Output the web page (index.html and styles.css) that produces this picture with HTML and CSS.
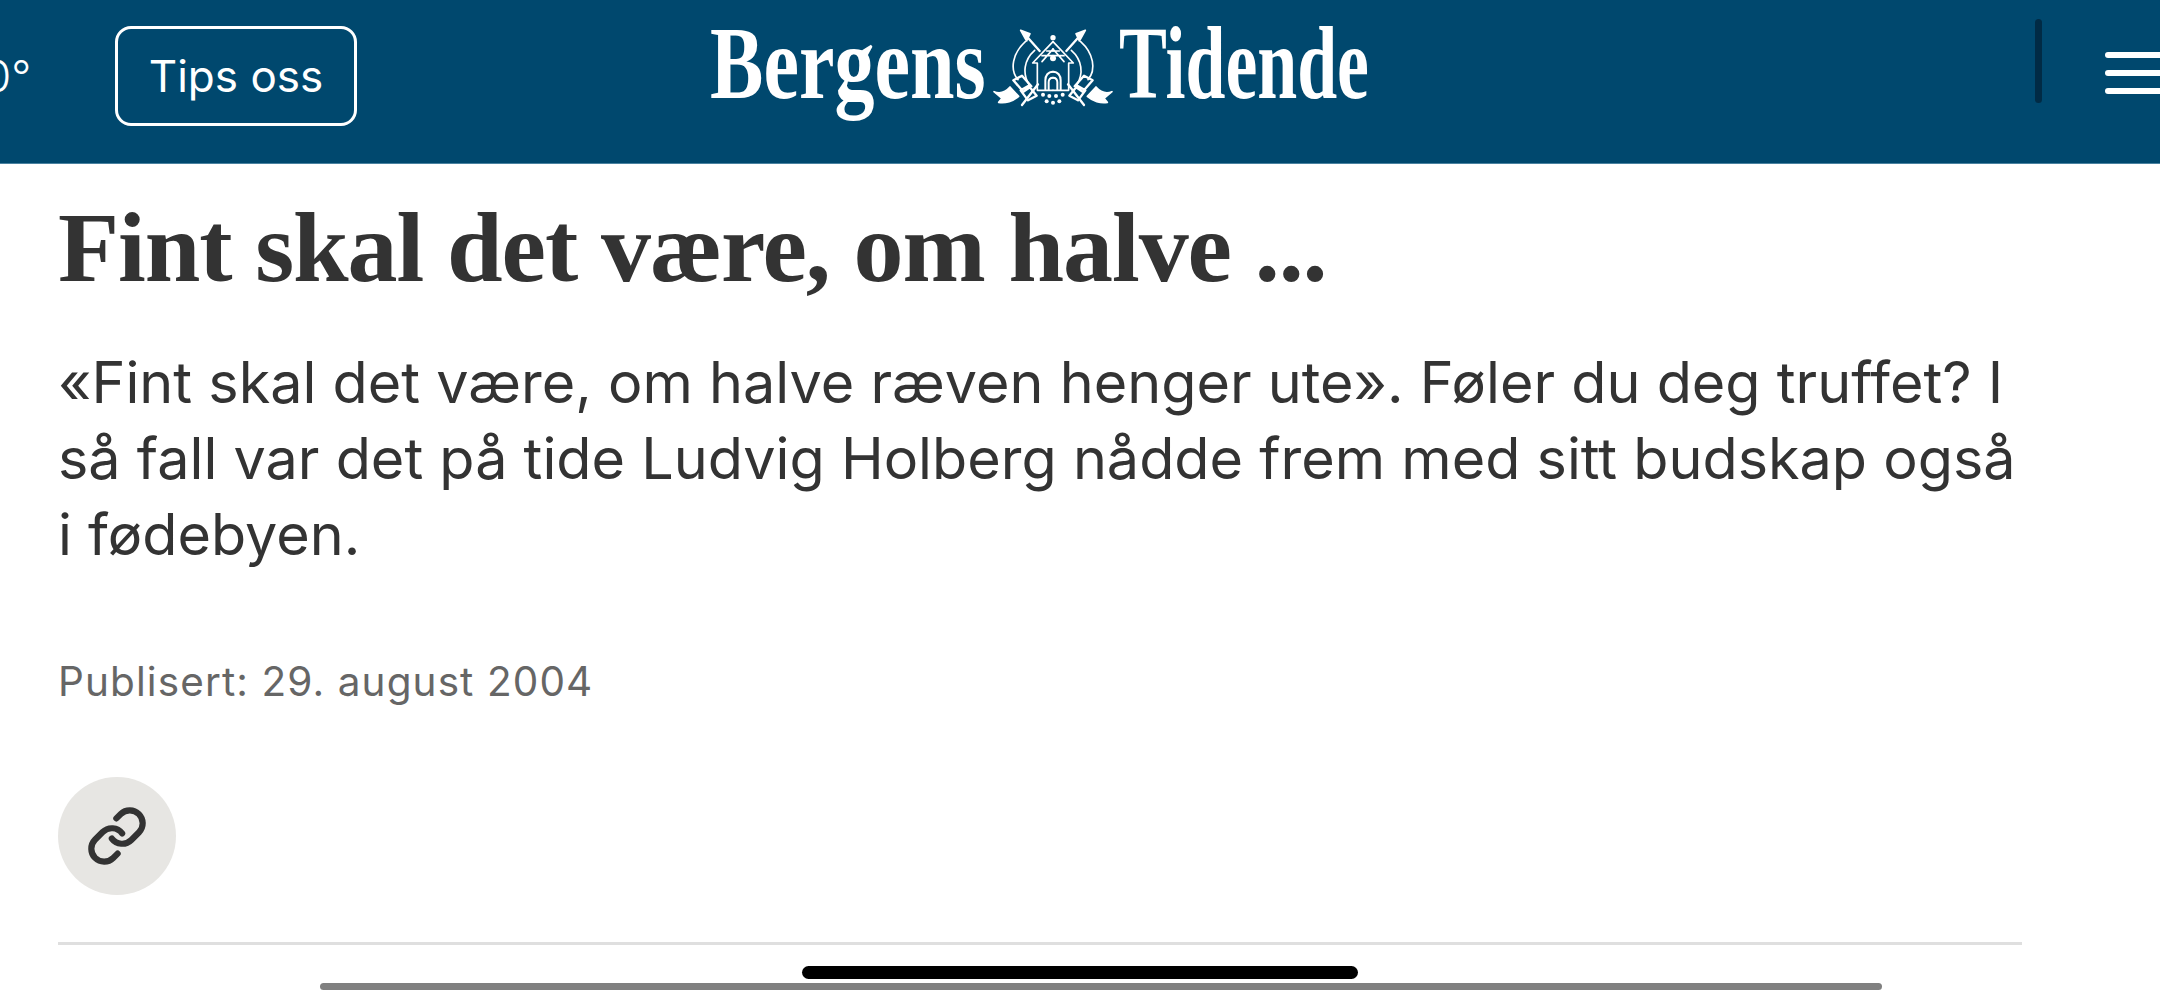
FILE: index.html
```html
<!DOCTYPE html>
<html lang="no">
<head>
  <meta charset="UTF-8" />
  <title>Fint skal det være, om halve ...</title>
  <link rel="stylesheet" href="styles.css">
</head>
<body>
  <header class="topbar">
    <span class="temp">0°</span>
    <a class="tips" href="#">Tips oss</a>
    <a class="logo" href="#">
      <span class="logo-box logo-box-left"><span class="logo-word word-bergens">Bergens</span></span>
      <svg class="crest" viewBox="25 25 360 235" fill="none" stroke="#fff" stroke-width="5" stroke-linecap="round" stroke-linejoin="round">
        <g>
          <path d="M125 45L165 90M250 190L298 252" stroke-width="7"/>
          <path d="M108 28L136 38L126 60Z" fill="#fff"/>
          <path d="M122 62C84 96 74 146 100 176M150 88C118 116 112 158 134 192"/>
          <path d="M205 62L144 126L158 126V208H205"/>
          <path d="M205 84L172 122M172 104H205M186 90H205"/>
          <path d="M205 152C190 152 182 164 182 178V206M205 170C197 170 192 175 192 184V206" stroke-width="6"/>
          <path d="M86 178L112 164L140 196L116 212ZM108 208L132 194L156 224L130 238Z" stroke-width="7"/>
          <path d="M28 212C48 220 62 214 76 198L102 226C86 240 62 248 42 244L52 232Z" fill="#fff"/>
        </g>
        <g transform="matrix(-1 0 0 1 410 0)">
          <path d="M125 45L165 90M250 190L298 252" stroke-width="7"/>
          <path d="M108 28L136 38L126 60Z" fill="#fff"/>
          <path d="M122 62C84 96 74 146 100 176M150 88C118 116 112 158 134 192"/>
          <path d="M205 62L144 126L158 126V208H205"/>
          <path d="M205 84L172 122M172 104H205M186 90H205"/>
          <path d="M205 152C190 152 182 164 182 178V206M205 170C197 170 192 175 192 184V206" stroke-width="6"/>
          <path d="M86 178L112 164L140 196L116 212ZM108 208L132 194L156 224L130 238Z" stroke-width="7"/>
          <path d="M28 212C48 220 62 214 76 198L102 226C86 240 62 248 42 244L52 232Z" fill="#fff"/>
        </g>
        <circle cx="205" cy="50" r="8" fill="#fff" stroke="none"/>
        <circle cx="205" cy="112" r="9" fill="#fff" stroke="none"/>
        <g fill="#fff" stroke="none">
          <circle cx="175" cy="221" r="6"/><circle cx="194" cy="225" r="6"/><circle cx="214" cy="225" r="6"/><circle cx="234" cy="221" r="6"/>
          <circle cx="186" cy="241" r="6"/><circle cx="205" cy="245" r="6"/><circle cx="224" cy="241" r="6"/>
        </g>
      </svg>
      <span class="logo-box logo-box-right"><span class="logo-word word-tidende">Tidende</span></span>
    </a>
    <span class="divider"></span>
    <button class="menu" aria-label="Meny"><i></i><i></i><i></i></button>
  </header>

  <main class="article">
    <h1 class="title">Fint skal det være, om halve ...</h1>
    <p class="lead">«Fint skal det være, om halve ræven henger ute». Føler du deg truffet? I så fall var det på tide Ludvig Holberg nådde frem med sitt budskap også i fødebyen.</p>
    <p class="meta">Publisert: 29. august 2004</p>
    <a class="share" href="#" aria-label="Kopier lenke">
      <svg viewBox="0 0 24 24" width="62" height="62" fill="none" stroke="#333" stroke-width="2.4" stroke-linecap="round" stroke-linejoin="round">
        <path d="M10 13a5 5 0 0 0 7.54.54l3-3a5 5 0 0 0-7.07-7.07l-1.72 1.71"/>
        <path d="M14 11a5 5 0 0 0-7.54-.54l-3 3a5 5 0 0 0 7.07 7.07l1.71-1.71"/>
      </svg>
    </a>
    <hr class="rule" />
  </main>

  <div class="home-bar"></div>
  <div class="scroll-bar"></div>
</body>
</html>
```

FILE: styles.css
```css
html, body {
  margin: 0;
  padding: 0;
  height: 997px;
  overflow: hidden;
  background: #fff;
  color: #333;
  font-family: "Inter", "Liberation Sans", sans-serif;
}
* { box-sizing: border-box; }

.topbar {
  display: flex;
  align-items: center;
  height: 164px;
  background: #00486e;
  border-bottom: 1px solid #4a82a0;
  color: #fff;
  overflow: hidden;
}

.temp {
  flex: none;
  width: 115px;
  margin-left: -16px;
  margin-right: 16px;
  margin-top: -12px;
  font-size: 44px;
  font-weight: 300;
}

.tips {
  display: flex;
  align-items: center;
  justify-content: center;
  flex: none;
  width: 242px;
  height: 100px;
  margin-top: -12px;
  border: 3px solid #fff;
  border-radius: 16px;
  color: #fff;
  font-size: 44px;
  text-decoration: none;
}

.logo {
  display: flex;
  align-items: center;
  flex: none;
  width: 658px;
  height: 100px;
  margin-left: 353px;
  margin-top: -27px;
  color: #fff;
  text-decoration: none;
}

.logo-box {
  display: block;
  flex: none;
  height: 100px;
}
.logo-box-left { width: 276px; margin-right: 7px; }
.logo-box-right { width: 248px; margin-left: 6px; }

.logo-word {
  display: inline-block;
  margin-top: -5px;
  font-family: "Liberation Serif", serif;
  font-weight: 700;
  font-size: 104px;
  line-height: 100px;
  white-space: nowrap;
  transform-origin: 0 50%;
}
.word-bergens { transform: scaleX(0.77); }
.word-tidende { transform: scaleX(0.69); }

.crest {
  width: 120px;
  height: 79px;
  flex: none;
}

.divider {
  flex: none;
  width: 7px;
  height: 84px;
  margin-left: 667px;
  margin-top: -42px;
  border-radius: 4px;
  background: #012b45;
}

.menu {
  display: flex;
  flex-direction: column;
  gap: 12px;
  flex: none;
  width: 80px;
  margin-left: 63px;
  margin-top: -18px;
  padding: 0;
  border: none;
  background: none;
}
.menu i {
  display: block;
  height: 6px;
  border-radius: 3px;
  background: #fff;
}

.article {
  width: 1964px;
  margin-left: 58px;
}

.title {
  margin: 29px 0 0;
  font-family: "Liberation Serif", serif;
  font-weight: 700;
  font-size: 100px;
  line-height: 110px;
  letter-spacing: -1.1px;
  color: #333;
}

.lead {
  margin: 41px 0 0;
  font-size: 57.5px;
  line-height: 76px;
  color: #333;
}

.meta {
  margin: 86px 0 0;
  font-size: 40.5px;
  line-height: 48px;
  letter-spacing: 1.1px;
  color: #666;
}

.share {
  display: flex;
  align-items: center;
  justify-content: center;
  width: 118px;
  height: 118px;
  margin-top: 71px;
  border-radius: 50%;
  background: #e7e6e3;
}

.rule {
  margin: 47px 0 0;
  border: none;
  height: 3px;
  background: #dfdfdf;
}

.home-bar {
  width: 556px;
  height: 13px;
  margin: 21px 0 0 802px;
  border-radius: 7px;
  background: #000;
}

.scroll-bar {
  width: 1562px;
  height: 7px;
  margin: 4px 0 0 320px;
  border-radius: 4px;
  background: #808080;
}
```
